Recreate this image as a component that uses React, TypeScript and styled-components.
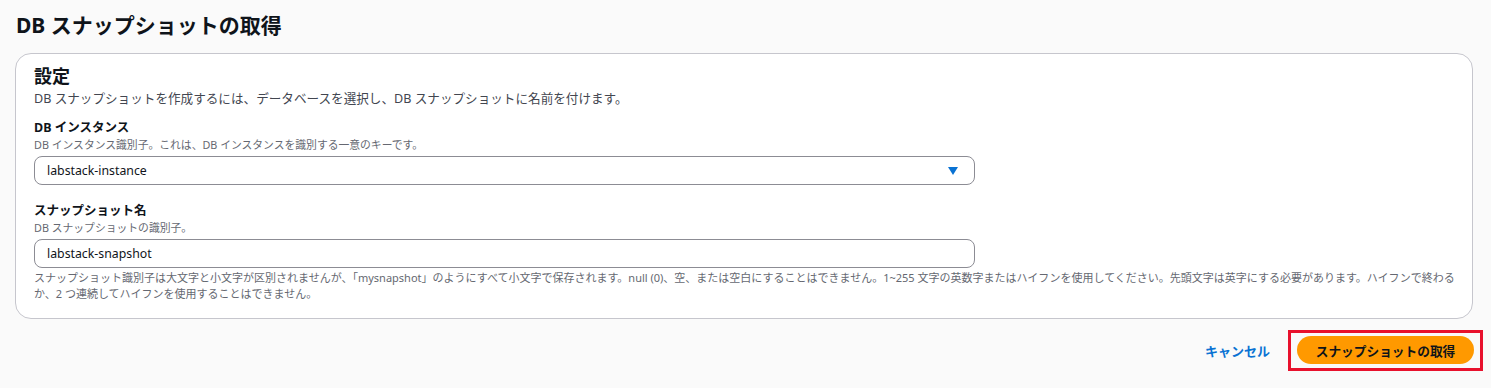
import React from "react";
import styled, { createGlobalStyle } from "styled-components";

const GlobalStyle = createGlobalStyle`
  html, body {
    margin: 0;
    padding: 0;
    background: #fafafa;
  }
  body {
    font-family: "Noto Sans", "Noto Sans CJK JP", "Open Sans", sans-serif;
    color: #0f141a;
  }
`;

const Page = styled.div`
  padding: 10px 18px 0 15px;
  display: flex;
  flex-direction: column;
`;

const Title = styled.h1`
  margin: 0 0 0 1px;
  font-size: 21px;
  line-height: 30px;
  font-weight: 700;
  color: #0f141a;
`;

const Panel = styled.section`
  margin-top: 13px;
  background: #ffffff;
  border: 1px solid #c6c6cd;
  border-radius: 16px;
  padding: 10px 12px 16px 18px;
  display: flex;
  flex-direction: column;
`;

const Heading = styled.h2`
  margin: 0;
  font-size: 18px;
  line-height: 24px;
  font-weight: 700;
`;

const Description = styled.p`
  margin: 0;
  font-size: 12.6px;
  line-height: 21px;
  color: #424650;
`;

const Field = styled.div<{ $top: number }>`
  margin-top: ${(p) => p.$top}px;
  display: flex;
  flex-direction: column;
`;

const Label = styled.label`
  font-size: 12.5px;
  line-height: 18px;
  font-weight: 700;
  color: #0f141a;
`;

const Hint = styled.div`
  font-size: 10.8px;
  line-height: 15px;
  color: #656871;
`;

const Control = styled.div`
  margin-top: 4px;
  width: 941px;
  height: 29px;
  box-sizing: border-box;
  border: 1px solid #8c8c94;
  border-radius: 8px;
  padding: 0 16px 0 12px;
  display: flex;
  align-items: center;
  justify-content: space-between;
  font-size: 12.3px;
  color: #0f141a;
`;

const Arrow = styled.svg`
  width: 10px;
  height: 8px;
  flex: none;
`;

const Constraint = styled.p`
  margin: 2px 0 0 0;
  font-size: 11px;
  line-height: 16px;
  color: #656871;
`;

const Actions = styled.div`
  margin-top: 11px;
  margin-right: -10px;
  display: flex;
  justify-content: flex-end;
  align-items: center;
  gap: 18px;
`;

const LinkButton = styled.button`
  background: none;
  border: none;
  padding: 0;
  font-family: inherit;
  font-size: 13px;
  font-weight: 700;
  color: #0972d3;
  cursor: pointer;
`;

const Highlight = styled.div`
  border: 3px solid #e8112d;
  padding: 3px 6px 4px 6px;
  display: flex;
`;

const PrimaryButton = styled.button`
  height: 28px;
  width: 177px;
  border: none;
  border-radius: 20px;
  background: #ff9900;
  color: #0f141a;
  font-family: inherit;
  font-size: 12.7px;
  font-weight: 700;
  cursor: pointer;
`;

export default function App() {
  return (
    <>
      <GlobalStyle />
      <Page>
        <Title>DB スナップショットの取得</Title>
        <Panel>
          <Heading>設定</Heading>
          <Description>
            DB スナップショットを作成するには、データベースを選択し、DB スナップショットに名前を付けます。
          </Description>
          <Field $top={10}>
            <Label>DB インスタンス</Label>
            <Hint>DB インスタンス識別子。これは、DB インスタンスを識別する一意のキーです。</Hint>
            <Control>
              <span>labstack-instance</span>
              <Arrow viewBox="0 0 10 8">
                <path d="M0 0 H10 L5 8 Z" fill="#0972d3" />
              </Arrow>
            </Control>
          </Field>
          <Field $top={17}>
            <Label>スナップショット名</Label>
            <Hint>DB スナップショットの識別子。</Hint>
            <Control>
              <span>labstack-snapshot</span>
            </Control>
          </Field>
          <Constraint>
            スナップショット識別子は大文字と小文字が区別されませんが、「mysnapshot」のようにすべて小文字で保存されます。null (0)、空、または空白にすることはできません。1~255 文字の英数字またはハイフンを使用してください。先頭文字は英字にする必要があります。ハイフンで終わるか、2 つ連続してハイフンを使用することはできません。
          </Constraint>
        </Panel>
        <Actions>
          <LinkButton>キャンセル</LinkButton>
          <Highlight>
            <PrimaryButton>スナップショットの取得</PrimaryButton>
          </Highlight>
        </Actions>
      </Page>
    </>
  );
}
